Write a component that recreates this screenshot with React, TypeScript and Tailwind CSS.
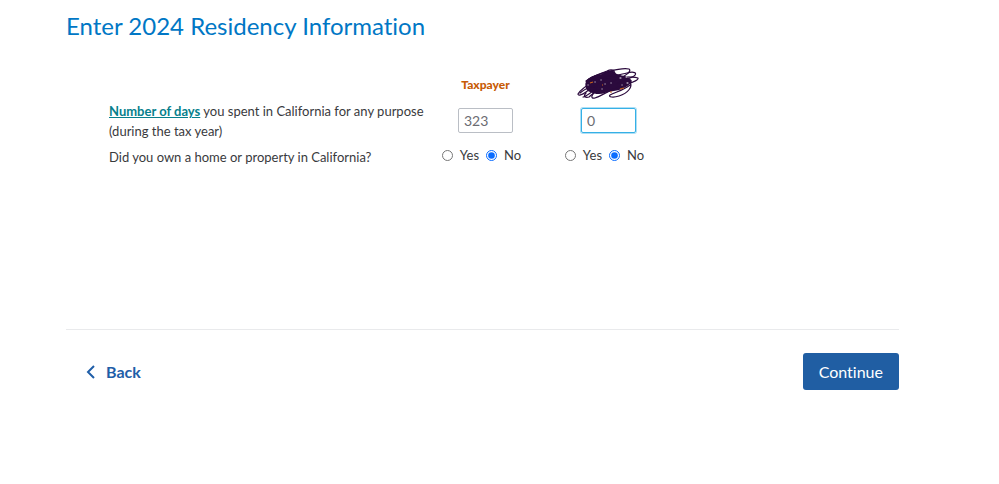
import { useState } from "react";

type Person = { id: string; name: string; days: string; hidden: boolean };

const people: Array<Person> = [
    { id: "taxpayer", name: "Taxpayer", days: "323", hidden: false },
    { id: "spouse", name: "Spouse", days: "0", hidden: true },
];

function Scribble() {
    return (
        <svg width="64" height="33" viewBox="0 0 64 33" fill="none" className="mx-auto" role="img" aria-label="Name hidden">
            <path
                d="M9 13C13 8 19 7 25 6C30 2 36 2 38 4C39 7 44 7 48 8C52 10 54 11 55 13C53 17 49 19 45 21C40 23 34 23 28 25C23 27 17 26 13 24C8 22 8 18 9 13Z"
                fill="#2b0a3d"
            />
            <g stroke="#2b0a3d" strokeWidth="1.2" strokeLinecap="round" strokeLinejoin="round">
                <path d="M9 13C15 8 23 6 30 3C34 1 38 2 37 4C34 9 20 16 9 24C5 27 1 28 1 26C3 22 8 20 11 16" />
                <path d="M12 11C20 6 44 -1 52 1C55 3 49 8 41 11C30 16 21 20 12 29C8 30 6 28 9 25" />
                <path d="M9 16C22 8 40 8 50 5C57 3 61 5 57 8C52 11 44 13 40 16" />
                <path d="M13 12C26 9 52 8 61 10C62 13 52 15 42 19C31 23 24 28 18 30C13 31 14 27 20 22" />
                <path d="M3 25C9 20 15 18 20 19C17 23 8 29 6 29" />
                <path d="M53 14C56 19 51 25 42 28C36 30 31 29 33 27C39 24 47 22 53 17" />
            </g>
            <g stroke="#fff" strokeWidth="1" strokeLinecap="round">
                <path d="M18 14h.1M24 12h.1M28 16h.1M25 21h.1M34 15h.1M43 10h1M49 9h1M45 17h.1M11 17h.1M50 15h1" />
            </g>
            <path d="M13 15l3-1M25 17h1M33 24h2M43 21l4-1" stroke="#c8611a" strokeWidth="1.2" />
        </svg>
    );
}

function YesNo({ person }: { person: Person }) {
    const [owns, setOwns] = useState("No");

    return (
        <div role="radiogroup" aria-labelledby="own-label" className="flex h-4 items-center justify-center gap-[7px] pr-2">
            {["Yes", "No"].map((answer) => (
                <label key={answer} className="flex items-center gap-[7px]">
                    <input
                        type="radio"
                        name={"own-" + person.id}
                        value={answer}
                        className="h-[11px] w-[11px] accent-[#0a6cff]"
                        checked={owns === answer}
                        onChange={() => setOwns(answer)}
                    />
                    {answer}
                </label>
            ))}
        </div>
    );
}

export default function App() {
    const [days, setDays] = useState(people.map((p) => p.days));

    return (
        <main className="pr-[100px] pl-[66px] font-['Lato','Open_Sans',sans-serif] text-[13px] leading-5 text-[#393a3d] [font-variant-ligatures:none]">
            <h1 className="pt-[10px] text-[24px] leading-8 text-[#0077c5]">Enter 2024 Residency Information</h1>

            <form className="mt-[26px]" onSubmit={(e) => e.preventDefault()}>
                <div className="min-h-[262px] border-b border-[#e9eaec] pl-[43px]">
                    <table className="w-[561px] table-fixed">
                        <colgroup>
                            <col />
                            <col className="w-[123px]" />
                            <col className="w-[123px]" />
                        </colgroup>
                        <thead>
                            <tr className="h-[33px]">
                                <td></td>
                                {people.map((p) => (
                                    <th key={p.id} scope="col" className="text-[12px] font-black text-[#c75b05]">
                                        {p.hidden ? <Scribble /> : p.name}
                                    </th>
                                ))}
                            </tr>
                        </thead>
                        <tbody>
                            <tr className="h-[46px] align-top">
                                <th scope="row" id="days-label" className="text-left font-normal">
                                    <a href="#days" className="font-bold text-[#077f8c] underline">
                                        Number of days
                                    </a>{" "}
                                    you spent in California for any purpose (during the tax year)
                                </th>
                                {people.map((p, i) => (
                                    <td key={p.id} className="pt-[7px] text-center">
                                        <input
                                            type="text"
                                            aria-labelledby="days-label"
                                            className={
                                                "h-[25px] w-[55px] rounded-xs border px-[5px] text-[14px] text-[#6b6c72] outline-none " +
                                                (p.hidden ? "border-[#35b0e6] ring-1 ring-[#35b0e6]/40" : "border-[#babec5]")
                                            }
                                            value={days[i]}
                                            onChange={(e) => setDays(days.map((d, n) => (n === i ? e.target.value : d)))}
                                        />
                                    </td>
                                ))}
                            </tr>
                            <tr className="align-top">
                                <th scope="row" id="own-label" className="text-left font-normal">
                                    Did you own a home or property in California?
                                </th>
                                {people.map((p) => (
                                    <td key={p.id}>
                                        <YesNo person={p} />
                                    </td>
                                ))}
                            </tr>
                        </tbody>
                    </table>
                </div>

                <div className="mt-[23px] flex items-center justify-between pl-5 text-[16px]">
                    <button type="button" className="flex items-center gap-[10px] font-bold text-[#1f5ea8]">
                        <svg width="10" height="14" viewBox="0 0 10 14" fill="none" stroke="currentColor" strokeWidth="2" aria-hidden="true">
                            <path d="M8 1L2 7L8 13" />
                        </svg>
                        Back
                    </button>
                    <button type="submit" className="h-[37px] rounded-[3px] bg-[#205ea3] px-4 text-white">
                        Continue
                    </button>
                </div>
            </form>
        </main>
    );
}
